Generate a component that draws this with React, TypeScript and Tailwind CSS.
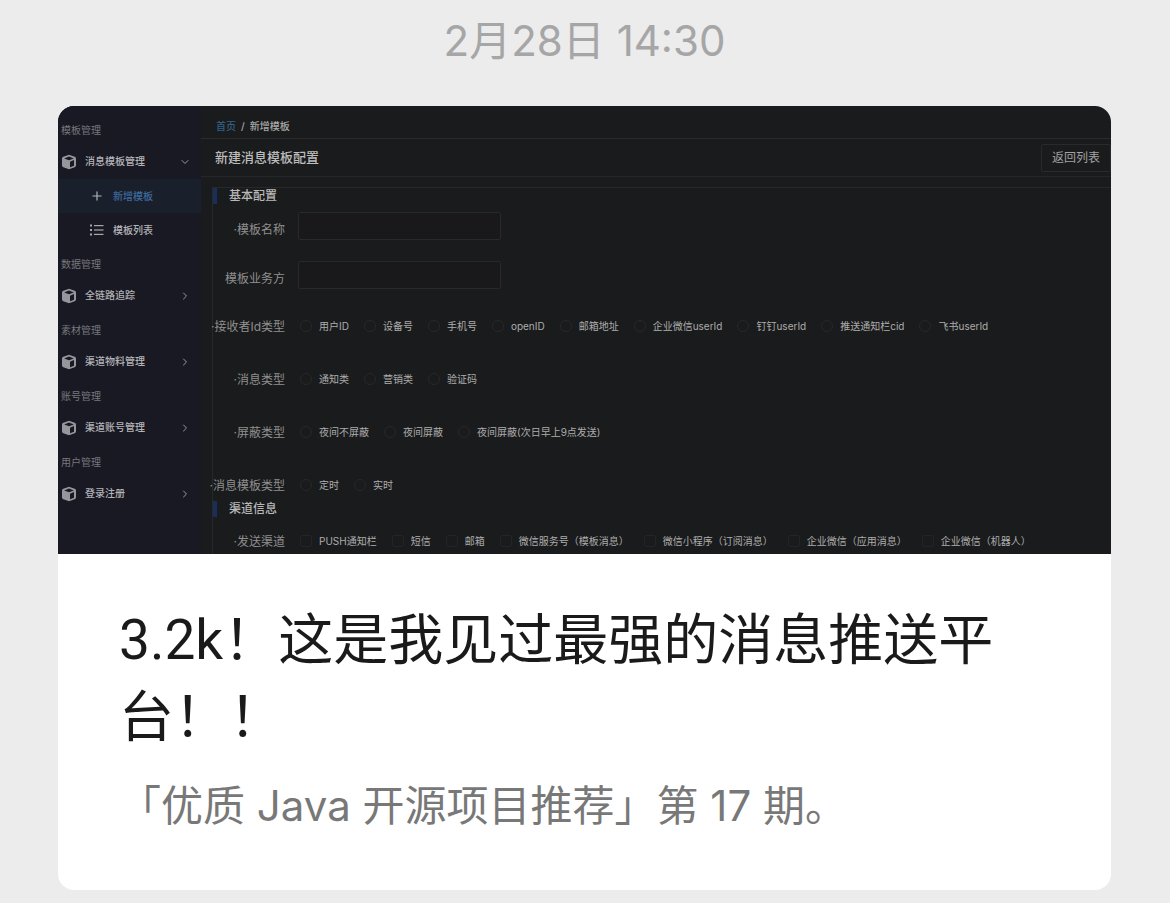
import React from "react";
import { ChevronDown, ChevronRight, Plus } from "lucide-react";

function CubeIcon() {
  return (
    <svg viewBox="0 0 16 16" className="size-4 shrink-0" aria-hidden="true">
      <path
        fillRule="evenodd"
        fill="#96969c"
        d="M7.3.9a2 2 0 0 1 1.4 0l5 1.9c.8.3 1.3 1 1.3 1.9v6.6c0 .8-.5 1.6-1.3 1.9l-5 1.9a2 2 0 0 1-1.4 0l-5-1.9A2 2 0 0 1 1 11.3V4.7c0-.9.5-1.6 1.3-1.9l5-1.9ZM8 2.5 3.2 4.4 8 6.3l4.8-1.9L8 2.5Zm1 10.8 4-1.6V6.1L9 7.7v5.6Z"
      />
    </svg>
  );
}

function ListIcon() {
  return (
    <svg viewBox="0 0 14 12" className="h-3 w-[14px] shrink-0" fill="#a8a8ac" aria-hidden="true">
      <rect x="0" y="0.5" width="2" height="2" />
      <rect x="0" y="5" width="2" height="2" />
      <rect x="0" y="9.5" width="2" height="2" />
      <rect x="4" y="1" width="9.5" height="1.2" />
      <rect x="4" y="5.4" width="9.5" height="1.2" />
      <rect x="4" y="9.8" width="9.5" height="1.2" />
    </svg>
  );
}

function GroupLabel({ children }: { children: string }) {
  return <h3 className="flex h-[33px] items-center pt-0.5 pl-[3px] text-[#77777c]">{children}</h3>;
}

function MenuItem({ label, open = false }: { label: string; open?: boolean }) {
  const Chevron = open ? ChevronDown : ChevronRight;
  return (
    <button type="button" aria-expanded={open} className="flex h-[33px] w-full items-center pr-2.5 pb-0.5 pl-[3px] font-medium text-[#b4b4b8]">
      <CubeIcon />
      <span className="ml-2 flex-1 text-left">{label}</span>
      <Chevron className="size-3 text-[#98989d]" strokeWidth={2} />
    </button>
  );
}

function Sidebar() {
  return (
    <nav className="w-[143px] shrink-0 bg-[#191923] pt-[7px] text-[10px]">
      <GroupLabel>模板管理</GroupLabel>
      <MenuItem label="消息模板管理" open />
      <a href="#new" className="flex h-[34px] items-center bg-[#1a202b] pl-8 font-medium text-[#3d6a9f]">
        <Plus className="size-[14px] text-[#b4b4b8]" strokeWidth={2} />
        <span className="ml-[9px]">新增模板</span>
      </a>
      <a href="#list" className="flex h-[34px] items-center pl-8 font-medium text-[#b4b4b8]">
        <ListIcon />
        <span className="ml-[9px]">模板列表</span>
      </a>
      <GroupLabel>数据管理</GroupLabel>
      <MenuItem label="全链路追踪" />
      <GroupLabel>素材管理</GroupLabel>
      <MenuItem label="渠道物料管理" />
      <GroupLabel>账号管理</GroupLabel>
      <MenuItem label="渠道账号管理" />
      <GroupLabel>用户管理</GroupLabel>
      <MenuItem label="登录注册" />
    </nav>
  );
}

function SectionTitle({ children }: { children: string }) {
  return (
    <h3 className="flex h-4 items-center gap-3 text-xs font-medium text-[#b8b8b8]">
      <span className="h-4 w-1 bg-[#182f5c]" />
      {children}
    </h3>
  );
}

function Star() {
  return <span className="text-[#8f8f8f]">·</span>;
}

function TextRow({ id, label, required = false }: { id: string; label: string; required?: boolean }) {
  return (
    <div className="flex h-7 items-center">
      <label htmlFor={id} className="w-[72px] shrink-0 pt-[7px] text-right text-xs whitespace-nowrap text-[#8f8f8f]">
        {required && <Star />}
        {label}
      </label>
      <input id={id} type="text" className="ml-[13px] h-7 w-[203px] rounded-xs border border-[#29292b] bg-[#19191b] px-2 text-[10px] text-[#b0b0b0] outline-none" />
    </div>
  );
}

function ChoiceRow({ name, label, options, multiple = false }: { name: string; label: string; options: string[]; multiple?: boolean }) {
  return (
    <fieldset className="flex h-5 items-center">
      <legend className="contents">
        <span className="flex w-[72px] shrink-0 justify-end pt-0.5 text-xs whitespace-nowrap text-[#8f8f8f]">
          <Star />
          {label}
        </span>
      </legend>
      <div className="ml-[15px] flex gap-[15px]">
        {options.map((option) => (
          <label key={option} className="flex items-center gap-[7px] text-[10px] whitespace-nowrap text-[#adadad]">
            <input
              type={multiple ? "checkbox" : "radio"}
              name={name}
              className={
                multiple
                  ? "size-3 appearance-none rounded-xs border border-[#242426]"
                  : "size-3 appearance-none rounded-full border border-[#28282a]"
              }
            />
            {option}
          </label>
        ))}
      </div>
    </fieldset>
  );
}

function Console() {
  return (
    <section className="flex h-[448px] overflow-hidden rounded-t-2xl bg-[#1a1b1c]">
      <Sidebar />
      <div className="min-w-0 flex-1">
        <div className="flex h-[33px] items-center border-b border-[#2a2a2c] pt-2 pl-[15px] text-[10px] font-medium text-[#a8a8a8]">
          <a href="#home" className="text-[#326087]">首页</a>
          <span className="mx-[5px]">/</span>
          <span>新增模板</span>
        </div>
        <div className="flex h-[38px] items-center justify-between border-b border-[#262628] pl-[14px]">
          <h2 className="text-[13px] font-medium text-[#bcbcbc]">新建消息模板配置</h2>
          <button type="button" className="h-7 rounded-xs border border-[#2a2a2c] px-2.5 text-xs text-[#a2a2a2]">返回列表</button>
        </div>
        <form className="mt-[10px] ml-[11px] h-[400px] border-t border-l border-[#28282a]">
          <SectionTitle>基本配置</SectionTitle>
          <div className="mt-2 flex flex-col gap-[21px]">
            <TextRow id="template-name" label="模板名称" required />
            <TextRow id="template-owner" label="模板业务方" />
          </div>
          <div className="mt-7 flex flex-col gap-[33px]">
            <ChoiceRow name="receiver" label="接收者Id类型" options={["用户ID", "设备号", "手机号", "openID", "邮箱地址", "企业微信userId", "钉钉userId", "推送通知栏cid", "飞书userId"]} />
            <ChoiceRow name="message" label="消息类型" options={["通知类", "营销类", "验证码"]} />
            <ChoiceRow name="shield" label="屏蔽类型" options={["夜间不屏蔽", "夜间屏蔽", "夜间屏蔽(次日早上9点发送)"]} />
            <ChoiceRow name="template" label="消息模板类型" options={["定时", "实时"]} />
          </div>
          <div className="mt-[5px]">
            <SectionTitle>渠道信息</SectionTitle>
          </div>
          <div className="mt-[14px]">
            <ChoiceRow multiple name="channel" label="发送渠道" options={["PUSH通知栏", "短信", "邮箱", "微信服务号（模板消息）", "微信小程序（订阅消息）", "企业微信（应用消息）", "企业微信（机器人）"]} />
          </div>
        </form>
      </div>
    </section>
  );
}

export default function App() {
  return (
    <main lang="zh-CN" className="min-h-screen bg-[#ececec] pt-4 pr-[59px] pb-[13px] pl-[58px] font-['Inter','Noto_Sans_CJK_SC',sans-serif]">
      <time className="block text-center text-[42px] leading-[50px] text-[#a6a6a6]">2月28日 14:30</time>
      <article className="mt-10 rounded-2xl bg-white">
        <Console />
        <div className="pt-12 pr-[62px] pb-[54px] pl-[61px]">
          <h1 className="font-['Roboto','Noto_Sans_CJK_SC',sans-serif] text-[55px] leading-[77px] text-[#1a1a1a]">3.2k！这是我见过最强的消息推送平台！！</h1>
          <p className="mt-5 text-[42px] leading-[60px] text-[#787878]">「优质 Java 开源项目推荐」第 17 期。</p>
        </div>
      </article>
    </main>
  );
}
